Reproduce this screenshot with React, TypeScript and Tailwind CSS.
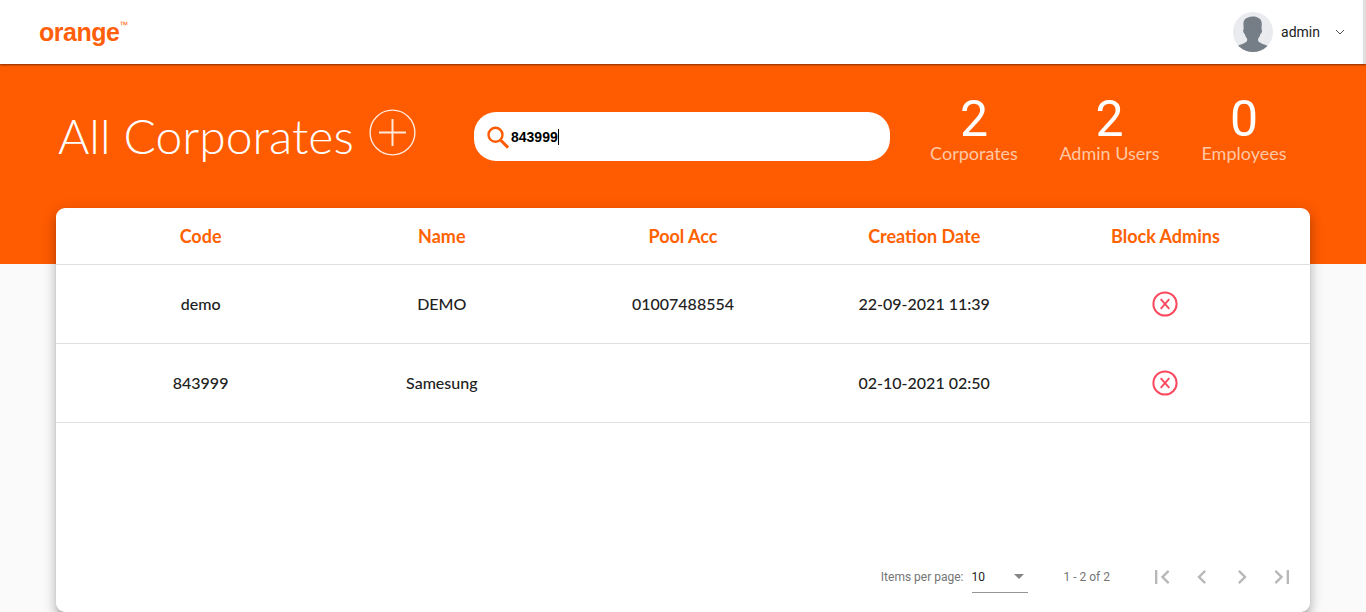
import React from "react";

type Corporate = { code: string; name: string; pool: string; date: string };

const columns = ["Code", "Name", "Pool Acc", "Creation Date", "Block Admins"];

const corporates: Corporate[] = [
  { code: "demo", name: "DEMO", pool: "01007488554", date: "22-09-2021 11:39" },
  { code: "843999", name: "Samesung", pool: "", date: "02-10-2021 02:50" },
];

const stats = [
  { value: "2", label: "Corporates", width: "w-[90px]", spacing: "tracking-[0px]" },
  { value: "2", label: "Admin Users", width: "w-[101px]", spacing: "tracking-[0px]" },
  { value: "0", label: "Employees", width: "w-[88px]", spacing: "tracking-[0px]" },
];

function Avatar() {
  return (
    <svg className="block size-10" viewBox="0 0 40 40">
      <defs>
        <clipPath id="avatar-clip">
          <circle cx="20" cy="20" r="20" />
        </clipPath>
      </defs>
      <g clipPath="url(#avatar-clip)">
        <rect width="40" height="40" fill="#e9ebef" />
        <path
          fill="#757e87"
          d="M20 4.6c2 0 3.300.3 4.500.9 2.800.9 4.300 3 4.300 6.500l-.3 5.300c.7.200.7 1.400.3 2.700-.3 1.100-.8 1.800-1.400 1.900-.5 2-1.300 3.500-2.300 4.700v2.200c.7 1.700 3.200 2.700 6 3.700 2.300.8 4 1.600 4.900 2.500V42H3v-7c1-.9 2.700-1.700 5-2.500 2.800-1 5.400-2 6.100-3.700v-2.200c-1-1.200-1.800-2.700-2.300-4.700-.6-.1-1.100-.8-1.400-1.900-.4-1.300-.4-2.500.3-2.700l-.3-5.300c-.1-3.800 1.800-5.600 4.600-6.500 1.300-.6 3-.9 5-.9z"
        />
      </g>
    </svg>
  );
}

function BlockIcon() {
  return (
    <svg className="block size-[26px]" viewBox="0 0 26 26" fill="none" stroke="#fb4a5f">
      <circle cx="13" cy="13" r="11.600" strokeWidth="2" />
      <path d="M8.700 8.200l8.600 9.600M17.300 8.200l-8.600 9.600" strokeWidth="1.900" />
    </svg>
  );
}

function PagerButton({ d }: { d: string }) {
  return (
    <button className="flex size-10 items-center justify-center">
      <svg className="size-7" viewBox="0 0 24 24" fill="#b8b8b8">
        <path d={d} />
      </svg>
    </button>
  );
}

export default function App() {
  return (
    <div className="flex h-[612px] w-full flex-col overflow-hidden bg-[#fafafa] font-[Roboto,sans-serif]">
      <header className="relative z-10 flex h-16 shrink-0 items-center justify-between border-r-[3px] border-[#dedede] bg-white pr-[18px] pl-[39px] shadow-[0_1px_2px_rgba(0,0,0,0.5)]">
        <div className="flex items-start text-[#ff5f0a]">
          <span className="font-['Liberation_Sans',sans-serif] text-[25px] leading-[60px] font-bold tracking-[-0.5px]">
            orange
          </span>
          <span className="mt-[18px] font-['Liberation_Sans',sans-serif] text-[9px] leading-[10px]">™</span>
        </div>
        <div className="flex items-center">
          <Avatar />
          <span className="ml-2 text-sm leading-[38px] font-normal text-[#212121]">admin</span>
          <svg className="ml-[15px] size-[10px]" viewBox="0 0 10 10" fill="none" stroke="#555" strokeWidth="1">
            <path d="M1 3l4 4 4-4" />
          </svg>
        </div>
      </header>

      <section className="flex h-[200px] shrink-0 items-start bg-[#ff5b00] pl-[58px] text-white">
        <h1 className="mt-[42px] w-[311px] font-[Lato,sans-serif] text-[48px] leading-[60px] font-light whitespace-nowrap">
          All Corporates
        </h1>
        <svg className="mt-[45px] size-[47px] shrink-0" viewBox="0 0 47 47" fill="none" stroke="#ffe9dc">
          <circle cx="23.500" cy="23.500" r="22.400" strokeWidth="1.400" />
          <path d="M10 23.500h27M23.500 10v27" strokeWidth="2" />
        </svg>
        <div className="mt-12 ml-[58px] flex h-[49px] w-[416px] shrink-0 items-center rounded-[22px] bg-white pl-3">
          <svg className="mt-0.5 size-[25px]" viewBox="0 0 25 25" fill="none" stroke="#ff5b00">
            <circle cx="9.500" cy="9.800" r="7" strokeWidth="2.400" />
            <path d="M14.500 15l7.600 7.600" strokeWidth="3" />
          </svg>
          <span className="font-['Liberation_Sans',sans-serif] text-sm leading-4 font-bold text-black">843999</span>
          <span className="h-4 w-px bg-black" />
        </div>
        <div className="mt-[30px] ml-[39px] flex gap-10">
          {stats.map((s) => (
            <div key={s.label} className={`${s.width} flex flex-col items-center`}>
              <span className="text-[50px] leading-[50px]">{s.value}</span>
              <span className={`${s.spacing} font-[Lato,sans-serif] text-lg leading-[18px] whitespace-nowrap text-[#ffc8a6]`}>
                {s.label}
              </span>
            </div>
          ))}
        </div>
      </section>

      <main className="relative mx-14 -mt-14 flex h-[404px] shrink-0 flex-col rounded-[9px] bg-white font-[Lato,sans-serif] shadow-[0_5px_5px_-3px_rgba(0,0,0,0.2),0_8px_10px_1px_rgba(0,0,0,0.14),0_3px_14px_2px_rgba(0,0,0,0.12)]">
        <div className="grid h-[57px] grid-cols-5 items-center border-b border-[#e0e0e0] px-6 text-center text-lg font-bold text-[#ff6200]">
          {columns.map((c) => (
            <div key={c}>{c}</div>
          ))}
        </div>
        {corporates.map((c) => (
          <div
            key={c.code}
            className="grid h-[79px] grid-cols-5 items-center border-b border-[#e0e0e0] px-6 text-center text-base font-medium text-[#212121]"
          >
            <div>{c.code}</div>
            <div>{c.name}</div>
            <div>{c.pool}</div>
            <div>{c.date}</div>
            <div className="flex justify-center">
              <BlockIcon />
            </div>
          </div>
        ))}
        <footer className="mt-auto mb-[15px] flex h-10 items-center justify-end pr-2 font-[Roboto,sans-serif] text-xs text-[#757575]">
          <span>Items per page:</span>
          <div className="mt-[5px] ml-2 flex h-[26px] w-14 items-center justify-between border-b border-[#949494] pr-1 pb-[5px] text-[#212121]">
            <span>10</span>
            <svg className="h-[5px] w-[10px]" viewBox="0 0 10 5" fill="#858585">
              <path d="M0 0h10L5 5z" />
            </svg>
          </div>
          <span className="mr-8 ml-9">1 - 2 of 2</span>
          <PagerButton d="M18.410 16.590L13.820 12l4.590-4.590L17 6l-6 6 6 6zM6 6h2v12H6z" />
          <PagerButton d="M15.410 7.410L14 6l-6 6 6 6 1.410-1.410L10.830 12z" />
          <PagerButton d="M10 6L8.590 7.410 13.170 12l-4.580 4.590L10 18l6-6z" />
          <PagerButton d="M5.590 7.410L10.180 12l-4.590 4.590L7 18l6-6-6-6zM16 6h2v12h-2z" />
        </footer>
      </main>
    </div>
  );
}
